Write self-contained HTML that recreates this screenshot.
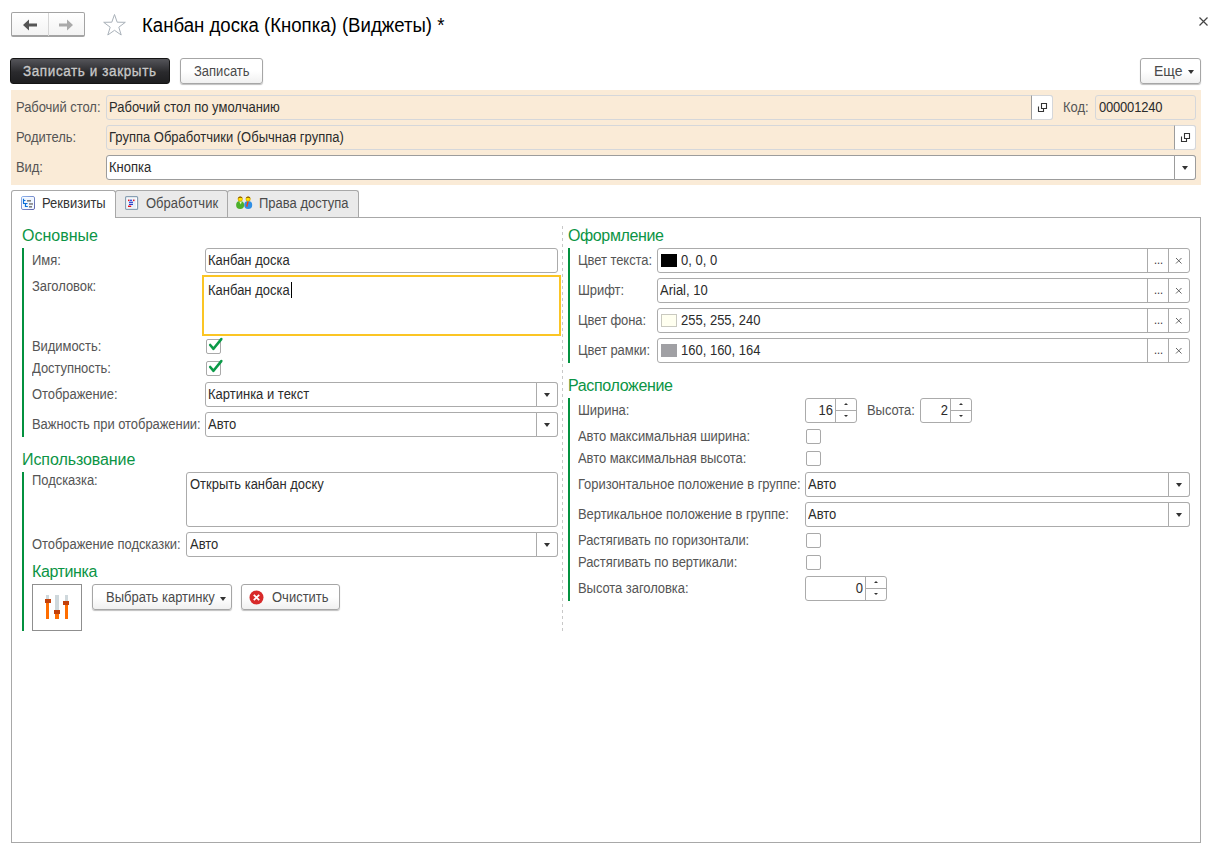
<!DOCTYPE html>
<html><head><meta charset="utf-8">
<style>
*{box-sizing:border-box;margin:0;padding:0}
html,body{width:1220px;height:854px;overflow:hidden;background:#fff;font-family:"Liberation Sans",sans-serif;font-size:13px;color:#4d4d4d;position:relative}
.a{position:absolute}
.t{position:absolute;white-space:nowrap;line-height:15px;height:15px;margin-left:-1px;transform:scaleY(1.08);transform-origin:0 12px}
.lbl{color:#555;margin-left:0;letter-spacing:-0.06px}
.val{color:#2b2b2b}
.inp{position:absolute;background:#fff;border:1px solid #ababab;border-radius:3px;height:24px}
.ro{background:#faebd7;border-color:#d5d7da}
.dd{position:absolute;top:-1px;right:-1px;bottom:-1px;width:22px;border:1px solid #ababab;border-radius:0 3px 3px 0;background:#fff}
.tri{position:absolute;left:7px;top:10px;width:6px;height:4px;background:#333;clip-path:polygon(0 0,100% 0,50% 100%)}
.grp{position:absolute;font-size:16px;color:#0b9445;white-space:nowrap;line-height:18px}
.gl{position:absolute;width:2px;background:#03913f}
.cb{position:absolute;width:15px;height:15px;border:1px solid #a9a9a9;border-radius:2px;background:#fff}
.btn{position:absolute;height:26px;border:1px solid #a6a6a6;border-radius:3px;background:linear-gradient(#fff,#fff 50%,#f0f0f0);box-shadow:0 1px 1px rgba(0,0,0,.25);color:#4a4a4a}
</style></head><body>
<!-- header -->
<div class="a" style="left:11px;top:12px;width:74px;height:25px;border:1px solid #a3a3a3;border-bottom:2px solid #a3a3a3;border-radius:2px;background:linear-gradient(#fff,#f3f3f3)"></div>
<div class="a" style="left:48px;top:13px;width:1px;height:23px;background:#d6d6d6"></div>
<svg class="a" style="left:22px;top:18px" width="16" height="14" viewBox="0 0 16 14"><path d="M1 7 L7 1.5 L7 5.5 L15 5.5 L15 8.5 L7 8.5 L7 12.5 Z" fill="#555"/></svg>
<svg class="a" style="left:58px;top:18px" width="16" height="14" viewBox="0 0 16 14"><path d="M15 7 L9 1.5 L9 5.5 L1 5.5 L1 8.5 L9 8.5 L9 12.5 Z" fill="#aaa"/></svg>
<svg class="a" style="left:102px;top:13px" width="25" height="24" viewBox="0 0 25 24"><path d="M12.5 1.5 L15.2 9.2 L23.3 9.3 L16.8 14.2 L19.2 22 L12.5 17.3 L5.8 22 L8.2 14.2 L1.7 9.3 L9.8 9.2 Z" fill="none" stroke="#a9b1b9" stroke-width="1"/></svg>
<div class="t" style="left:143px;top:16px;font-size:18.6px;line-height:20px;height:20px;color:#000;transform:scaleY(1.07);transform-origin:0 16px">Канбан доска (Кнопка) (Виджеты) *</div>
<svg class="a" style="left:1198px;top:16px" width="11" height="11" viewBox="0 0 11 11"><path d="M1.5 1.5 L9.5 9.5 M9.5 1.5 L1.5 9.5" stroke="#444" stroke-width="1.2"/></svg>

<!-- command bar -->
<div class="a" style="left:10px;top:58px;width:160px;height:26px;border:1px solid #141414;border-radius:3px;background:linear-gradient(#55555a,#2a2a2d 55%,#1e1e20)"></div>
<div class="t" style="left:24px;top:64px;font-size:13.5px;letter-spacing:0.6px;color:#c8c8c8;-webkit-text-stroke:0.3px #c8c8c8;transform:scaleY(1.04)">Записать и закрыть</div>
<div class="btn" style="left:180px;top:58px;width:83px"></div>
<div class="t" style="left:195px;top:64px;color:#4a4a4a">Записать</div>
<div class="btn" style="left:1140px;top:58px;width:61px"></div>
<div class="t" style="left:1155px;top:64px;font-size:14px;color:#4a4a4a">Еще</div>
<div class="tri" style="left:1188px;top:70px"></div>

<!-- beige -->
<div class="a" style="left:11px;top:90px;width:1190px;height:95px;background:#faebd7"></div>

<!-- beige fields -->
<div class="t lbl" style="left:16px;top:100px">Рабочий стол:</div>
<div class="inp ro" style="left:106px;top:95px;width:947px;height:25px"></div>
<div class="a" style="left:1031px;top:95px;width:22px;height:25px;background:#fff;border:1px solid #d5d7da;border-left:1px solid #9c9c9c;border-radius:0 3px 3px 0"></div>
<svg class="a" style="left:1036px;top:101px" width="12" height="12" viewBox="0 0 12 12"><path d="M5.5 2.5 H10.5 V7.5 H5.5 Z M2.5 5.5 V10.5 H7.5 V8" fill="none" stroke="#333" stroke-width="1.1"/></svg>
<div class="t val" style="left:110px;top:100px">Рабочий стол по умолчанию</div>
<div class="t lbl" style="left:1063px;top:100px">Код:</div>
<div class="inp ro" style="left:1095px;top:95px;width:101px;height:25px"></div>
<div class="t val" style="left:1100px;top:100px;letter-spacing:-0.2px">000001240</div>

<div class="t lbl" style="left:16px;top:130px">Родитель:</div>
<div class="inp ro" style="left:106px;top:125px;width:1090px;height:25px"></div>
<div class="a" style="left:1174px;top:125px;width:22px;height:25px;background:#fff;border:1px solid #d5d7da;border-left:1px solid #9c9c9c;border-radius:0 3px 3px 0"></div>
<svg class="a" style="left:1179px;top:131px" width="12" height="12" viewBox="0 0 12 12"><path d="M5.5 2.5 H10.5 V7.5 H5.5 Z M2.5 5.5 V10.5 H7.5 V8" fill="none" stroke="#333" stroke-width="1.1"/></svg>
<div class="t val" style="left:110px;top:130px">Группа Обработчики (Обычная группа)</div>

<div class="t lbl" style="left:16px;top:160px">Вид:</div>
<div class="inp" style="left:106px;top:155px;width:1090px;height:25px;border-color:#9c9c9c"><div class="dd" style="border-color:#9c9c9c"><div class="tri"></div></div></div>
<div class="t val" style="left:110px;top:160px">Кнопка</div>

<!-- tabs -->
<div class="a" style="left:11px;top:217px;width:1190px;height:626px;border:1px solid #a8a8a8;background:#fff"></div>
<div class="a" style="left:115px;top:190px;width:113px;height:27px;border:1px solid #a8a8a8;border-bottom:none;border-radius:3px 3px 0 0;background:#eaeaea"></div>
<div class="a" style="left:227px;top:190px;width:132px;height:27px;border:1px solid #a8a8a8;border-bottom:none;border-radius:3px 3px 0 0;background:#eaeaea"></div>
<div class="a" style="left:11px;top:190px;width:105px;height:28px;border:1px solid #a8a8a8;border-bottom:none;border-radius:3px 3px 0 0;background:#fff"></div>

<svg class="a" style="left:21px;top:196px" width="14" height="14" viewBox="0 0 14 14">
<defs><linearGradient id="g1" x1="0" y1="0" x2="1" y2="1"><stop offset="0" stop-color="#8fb4ee"/><stop offset="1" stop-color="#5d62a8"/></linearGradient></defs>
<rect x="0.5" y="0.5" width="13" height="13" rx="1.5" fill="#fff" stroke="url(#g1)" stroke-width="1"/>
<rect x="1.5" y="1.5" width="11" height="11" fill="#eef5ff"/>
<path d="M2.5 2.8 V7.5 M2.5 4.5 H4.5 M2 7.5 H6.5 M4.5 7.5 V10.5 H6.8" fill="none" stroke="#0a6fd8" stroke-width="1.2"/>
<rect x="6" y="4" width="4" height="1.6" fill="#7d7d7d"/><rect x="8" y="7.2" width="4" height="1.5" fill="#7d7d7d"/><rect x="8" y="10" width="3" height="1.6" fill="#7d7d7d"/>
</svg>
<svg class="a" style="left:125px;top:196px" width="14" height="14" viewBox="0 0 14 14">
<rect x="0.6" y="0.6" width="12" height="12.8" rx="1" fill="#fff" stroke="#889fb3" stroke-width="1.2"/>
<rect x="2.3" y="2.5" width="8.6" height="9.3" fill="#e8f0f8"/>
<rect x="3" y="3.6" width="1.5" height="1.5" fill="#e8101a"/><rect x="5" y="3.7" width="2" height="1.2" fill="#2a3ccc"/><rect x="8" y="3.6" width="1.5" height="1.5" fill="#e8101a"/>
<rect x="4" y="5.7" width="4" height="1.2" fill="#2a3ccc"/><rect x="4" y="7.8" width="4" height="1.2" fill="#2a3ccc"/><rect x="3" y="9.6" width="3.2" height="1.4" fill="#e8101a"/>
</svg>
<svg class="a" style="left:236px;top:196px" width="17" height="13" viewBox="0 0 17 13">
<ellipse cx="4.1" cy="9" rx="4" ry="3.9" fill="#4db02c"/>
<path d="M3.2 5.4 L5.8 5.4 L4.8 8.5 Z" fill="#e6ffc0"/>
<circle cx="4.2" cy="3" r="2.5" fill="#dcae00"/><circle cx="4.4" cy="3.1" r="1.7" fill="#ffe400"/>
<path d="M1.8 2.5 Q2.5 0.5 4.2 0.5 Q6 0.5 6.6 2.2 Q5 1.2 3 2 Z" fill="#8a5a00"/>
<ellipse cx="12.2" cy="9" rx="4" ry="3.9" fill="#2f8fe6"/>
<path d="M11.2 5.5 L12.8 5.5 L11.2 11 L10.2 10.2 Z" fill="#ff3c00"/>
<circle cx="12.1" cy="3" r="2.5" fill="#dcae00"/><circle cx="12" cy="3.1" r="1.7" fill="#ffe400"/>
<path d="M9.8 2.2 Q10.5 0.5 12.1 0.5 Q14 0.5 14.5 2.5 Q13 1.2 10.5 2 Z" fill="#8a5a00"/>
</svg>
<div class="t" style="left:43px;top:196px;color:#333">Реквизиты</div>
<div class="t" style="left:147px;top:196px;color:#4a4a4a">Обработчик</div>
<div class="t" style="left:260px;top:196px;color:#4a4a4a">Права доступа</div>

<!-- LEFT COLUMN -->
<div class="grp" style="left:22px;top:227px">Основные</div>
<div class="gl" style="left:22px;top:248px;height:189px"></div>
<div class="t lbl" style="left:32px;top:253px">Имя:</div>
<div class="inp" style="left:205px;top:248px;width:353px;height:25px"></div>
<div class="t val" style="left:209px;top:253px">Канбан доска</div>
<div class="t lbl" style="left:32px;top:279px">Заголовок:</div>
<div class="a" style="left:202px;top:275px;width:359px;height:61px;border:2px solid #fbc524;background:#fff"></div>
<div class="t val" style="left:209px;top:283px">Канбан доска</div>
<div class="a" style="left:291px;top:282px;width:1px;height:16px;background:#000"></div>
<div class="t lbl" style="left:32px;top:339px">Видимость:</div>
<div class="cb" style="left:206px;top:339px"></div>
<svg class="a" style="left:206px;top:336px" width="18" height="16" viewBox="0 0 18 16"><path d="M4.2 9 L7.5 12.8 L15.3 3.1" fill="none" stroke="#0b9a48" stroke-width="2.6" stroke-linecap="round" stroke-linejoin="round"/></svg>
<div class="t lbl" style="left:32px;top:361px">Доступность:</div>
<div class="cb" style="left:206px;top:361px"></div>
<svg class="a" style="left:206px;top:358px" width="18" height="16" viewBox="0 0 18 16"><path d="M4.2 9 L7.5 12.8 L15.3 3.1" fill="none" stroke="#0b9a48" stroke-width="2.6" stroke-linecap="round" stroke-linejoin="round"/></svg>
<div class="t lbl" style="left:32px;top:387px">Отображение:</div>
<div class="inp" style="left:205px;top:382px;width:353px;height:25px"><div class="dd"><div class="tri"></div></div></div>
<div class="t val" style="left:209px;top:387px">Картинка и текст</div>
<div class="t lbl" style="left:32px;top:417px">Важность при отображении:</div>
<div class="inp" style="left:205px;top:412px;width:353px;height:25px"><div class="dd"><div class="tri"></div></div></div>
<div class="t val" style="left:209px;top:417px">Авто</div>

<div class="grp" style="left:22px;top:451px;letter-spacing:-0.08px">Использование</div>
<div class="gl" style="left:22px;top:472px;height:159px"></div>
<div class="t lbl" style="left:32px;top:473px">Подсказка:</div>
<div class="inp" style="left:186px;top:472px;width:372px;height:55px"></div>
<div class="t val" style="left:191px;top:477px">Открыть канбан доску</div>
<div class="t lbl" style="left:32px;top:537px">Отображение подсказки:</div>
<div class="inp" style="left:186px;top:532px;width:372px;height:25px"><div class="dd"><div class="tri"></div></div></div>
<div class="t val" style="left:191px;top:537px">Авто</div>

<div class="grp" style="left:32px;top:563px;letter-spacing:-0.39px">Картинка</div>
<div class="a" style="left:32px;top:584px;width:50px;height:47px;border:1px solid #8f8f8f;background:#fff"></div>
<svg class="a" style="left:32px;top:584px" width="50" height="47" viewBox="0 0 50 47">
<rect x="14" y="11" width="3" height="5" fill="#cfd8dc"/><rect x="13" y="15" width="6" height="4" fill="#c2410c"/><rect x="14" y="19" width="3" height="16" fill="#ff6d00"/>
<rect x="23" y="11" width="4" height="15" fill="#cfd8dc"/><rect x="22" y="26" width="6" height="4" fill="#c2410c"/><rect x="23" y="30" width="4" height="5" fill="#ff6d00"/>
<rect x="33" y="11" width="3" height="7" fill="#cfd8dc"/><rect x="31" y="17" width="6" height="4" fill="#c2410c"/><rect x="33" y="21" width="3" height="14" fill="#ff6d00"/>
</svg>
<div class="btn" style="left:92px;top:584px;width:140px;height:26px"></div>
<div class="t" style="left:107px;top:590px;color:#4a4a4a">Выбрать картинку</div>
<div class="tri" style="left:220px;top:597px"></div>
<div class="btn" style="left:241px;top:584px;width:99px;height:26px"></div>
<svg class="a" style="left:249px;top:590px" width="15" height="15" viewBox="0 0 15 15"><circle cx="7.5" cy="7.5" r="7" fill="#d82a2a"/><path d="M4.8 4.8 L10.2 10.2 M10.2 4.8 L4.8 10.2" stroke="#fff" stroke-width="1.8"/></svg>
<div class="t" style="left:273px;top:590px;color:#4a4a4a">Очистить</div>

<div class="a" style="left:562px;top:226px;width:1px;height:405px;background-image:linear-gradient(#c8c8c8 50%,transparent 50%);background-size:1px 6px"></div>

<!-- RIGHT COLUMN -->
<div class="grp" style="left:568px;top:227px;letter-spacing:-0.38px">Оформление</div>
<div class="gl" style="left:568px;top:248px;height:115px"></div>
<div class="t lbl" style="left:578px;top:253px">Цвет текста:</div>
<div class="inp" style="left:657px;top:248px;width:533px;height:25px"></div>
<div class="a" style="left:1147px;top:248px;width:22px;height:25px;border-left:1px solid #ababab"></div>
<div class="a" style="left:1168px;top:248px;width:22px;height:25px;border-left:1px solid #ababab"></div>
<div class="t" style="left:1155px;top:253px;color:#333;font-size:11px">...</div>
<svg class="a" style="left:1174px;top:256px" width="9" height="9" viewBox="0 0 9 9"><path d="M2 2 L7.5 7.5 M7.5 2 L2 7.5" stroke="#555" stroke-width="0.9"/></svg>
<div class="a" style="left:661px;top:254px;width:16px;height:13px;background:#000;border:1px solid #000"></div>
<div class="t val" style="left:682px;top:253px">0, 0, 0</div>
<div class="t lbl" style="left:578px;top:283px">Шрифт:</div>
<div class="inp" style="left:657px;top:278px;width:533px;height:25px"></div>
<div class="a" style="left:1147px;top:278px;width:22px;height:25px;border-left:1px solid #ababab"></div>
<div class="a" style="left:1168px;top:278px;width:22px;height:25px;border-left:1px solid #ababab"></div>
<div class="t" style="left:1155px;top:283px;color:#333;font-size:11px">...</div>
<svg class="a" style="left:1174px;top:286px" width="9" height="9" viewBox="0 0 9 9"><path d="M2 2 L7.5 7.5 M7.5 2 L2 7.5" stroke="#555" stroke-width="0.9"/></svg>
<div class="t val" style="left:661px;top:283px">Arial, 10</div>
<div class="t lbl" style="left:578px;top:313px">Цвет фона:</div>
<div class="inp" style="left:657px;top:308px;width:533px;height:25px"></div>
<div class="a" style="left:1147px;top:308px;width:22px;height:25px;border-left:1px solid #ababab"></div>
<div class="a" style="left:1168px;top:308px;width:22px;height:25px;border-left:1px solid #ababab"></div>
<div class="t" style="left:1155px;top:313px;color:#333;font-size:11px">...</div>
<svg class="a" style="left:1174px;top:316px" width="9" height="9" viewBox="0 0 9 9"><path d="M2 2 L7.5 7.5 M7.5 2 L2 7.5" stroke="#555" stroke-width="0.9"/></svg>
<div class="a" style="left:661px;top:314px;width:16px;height:13px;background:#fffff0;border:1px solid #c9c9c0"></div>
<div class="t val" style="left:682px;top:313px">255, 255, 240</div>
<div class="t lbl" style="left:578px;top:343px">Цвет рамки:</div>
<div class="inp" style="left:657px;top:338px;width:533px;height:25px"></div>
<div class="a" style="left:1147px;top:338px;width:22px;height:25px;border-left:1px solid #ababab"></div>
<div class="a" style="left:1168px;top:338px;width:22px;height:25px;border-left:1px solid #ababab"></div>
<div class="t" style="left:1155px;top:343px;color:#333;font-size:11px">...</div>
<svg class="a" style="left:1174px;top:346px" width="9" height="9" viewBox="0 0 9 9"><path d="M2 2 L7.5 7.5 M7.5 2 L2 7.5" stroke="#555" stroke-width="0.9"/></svg>
<div class="a" style="left:661px;top:344px;width:16px;height:13px;background:#a0a0a4;border:1px solid #a0a0a4"></div>
<div class="t val" style="left:682px;top:343px">160, 160, 164</div>

<div class="grp" style="left:568px;top:377px;letter-spacing:-0.35px">Расположение</div>
<div class="gl" style="left:568px;top:398px;height:203px"></div>
<div class="t lbl" style="left:578px;top:403px">Ширина:</div>
<div class="inp" style="left:805px;top:398px;width:52px;height:25px"></div>
<div class="a" style="left:835px;top:398px;width:22px;height:25px;border-left:1px solid #ababab"></div>
<div class="a" style="left:836px;top:410px;width:20px;height:1px;background:#ababab"></div>
<div class="a" style="left:844px;top:403px;width:0;height:0;border-left:2px solid transparent;border-right:2px solid transparent;border-bottom:2px solid #333"></div>
<div class="a" style="left:844px;top:415px;width:0;height:0;border-left:2px solid transparent;border-right:2px solid transparent;border-top:2px solid #333"></div>
<div class="t val" style="left:805px;width:29px;text-align:right;top:403px">16</div>
<div class="t lbl" style="left:867px;top:403px">Высота:</div>
<div class="inp" style="left:920px;top:398px;width:52px;height:25px"></div>
<div class="a" style="left:950px;top:398px;width:22px;height:25px;border-left:1px solid #ababab"></div>
<div class="a" style="left:951px;top:410px;width:20px;height:1px;background:#ababab"></div>
<div class="a" style="left:959px;top:403px;width:0;height:0;border-left:2px solid transparent;border-right:2px solid transparent;border-bottom:2px solid #333"></div>
<div class="a" style="left:959px;top:415px;width:0;height:0;border-left:2px solid transparent;border-right:2px solid transparent;border-top:2px solid #333"></div>
<div class="t val" style="left:920px;width:29px;text-align:right;top:403px">2</div>
<div class="t lbl" style="left:578px;top:429px">Авто максимальная ширина:</div>
<div class="cb" style="left:806px;top:429px"></div>
<div class="t lbl" style="left:578px;top:451px">Авто максимальная высота:</div>
<div class="cb" style="left:806px;top:451px"></div>
<div class="t lbl" style="left:578px;top:477px">Горизонтальное положение в группе:</div>
<div class="inp" style="left:805px;top:472px;width:385px;height:25px"><div class="dd"><div class="tri"></div></div></div>
<div class="t val" style="left:809px;top:477px">Авто</div>
<div class="t lbl" style="left:578px;top:507px">Вертикальное положение в группе:</div>
<div class="inp" style="left:805px;top:502px;width:385px;height:25px"><div class="dd"><div class="tri"></div></div></div>
<div class="t val" style="left:809px;top:507px">Авто</div>
<div class="t lbl" style="left:578px;top:533px">Растягивать по горизонтали:</div>
<div class="cb" style="left:806px;top:533px"></div>
<div class="t lbl" style="left:578px;top:555px">Растягивать по вертикали:</div>
<div class="cb" style="left:806px;top:555px"></div>
<div class="t lbl" style="left:578px;top:581px">Высота заголовка:</div>
<div class="inp" style="left:805px;top:576px;width:82px;height:25px"></div>
<div class="a" style="left:865px;top:576px;width:22px;height:25px;border-left:1px solid #ababab"></div>
<div class="a" style="left:866px;top:588px;width:20px;height:1px;background:#ababab"></div>
<div class="a" style="left:874px;top:581px;width:0;height:0;border-left:2px solid transparent;border-right:2px solid transparent;border-bottom:2px solid #333"></div>
<div class="a" style="left:874px;top:593px;width:0;height:0;border-left:2px solid transparent;border-right:2px solid transparent;border-top:2px solid #333"></div>
<div class="t val" style="left:805px;width:59px;text-align:right;top:581px">0</div>
</body></html>
